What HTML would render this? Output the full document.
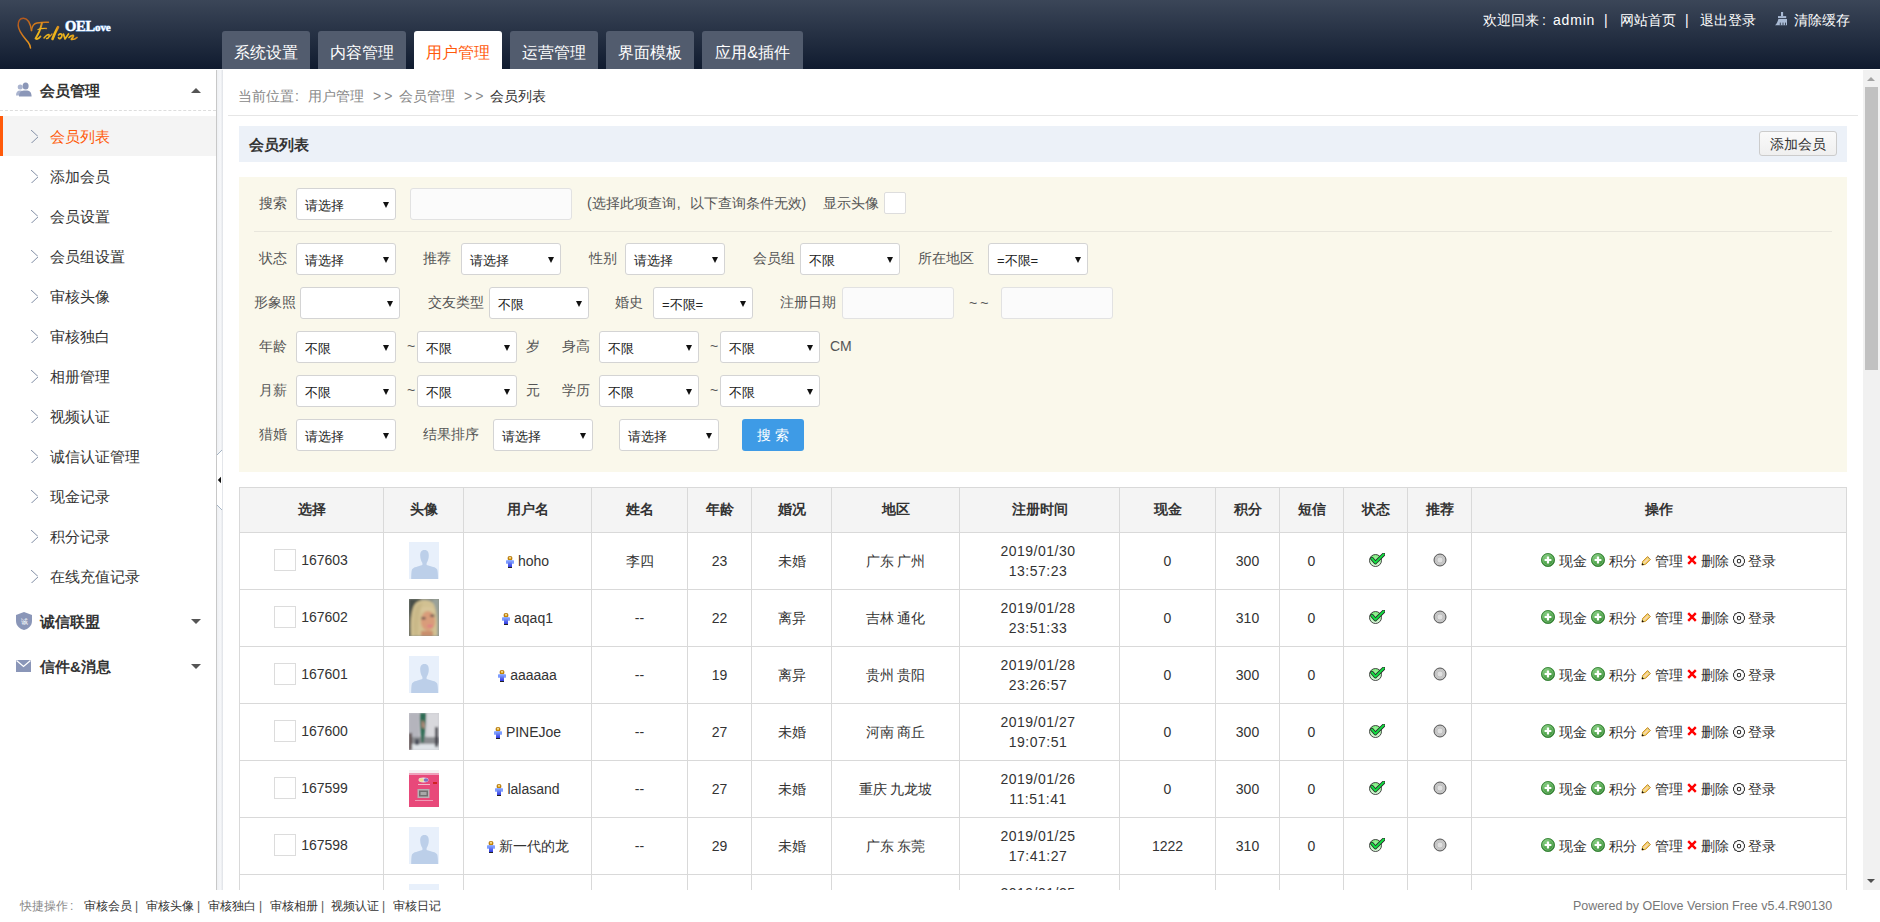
<!DOCTYPE html>
<html><head><meta charset="utf-8">
<style>
*{box-sizing:border-box;margin:0;padding:0}
html,body{width:1880px;height:922px;overflow:hidden;background:#fff;font-family:"Liberation Sans",sans-serif;color:#333}
.abs{position:absolute}
#hdr{position:absolute;left:0;top:0;width:1880px;height:69px;background:linear-gradient(#3b4658,#101b2f)}
.tab{position:absolute;top:31px;height:38px;width:88px;background:#525c6e;border-radius:3px 3px 0 0;color:#fff;font-size:16px;line-height:42px;padding-top:1px;text-align:center;white-space:nowrap}
.tab.on{background:#fff;color:#ff5a0a}
.tl{position:absolute;top:8px;color:#fff;font-size:14px;line-height:24px;white-space:nowrap}
#side{position:absolute;left:0;top:69px;width:216px;height:821px;background:#fff}
.sh{position:absolute;left:40px;font-size:15px;font-weight:bold;color:#333;line-height:22px;white-space:nowrap}
.si{position:absolute;left:0;width:216px;height:40px}
.si span{position:absolute;left:50px;top:1px;line-height:40px;font-size:15px;color:#333;white-space:nowrap}
.si i{position:absolute;left:31px;top:14px;width:7px;height:13px;background:linear-gradient(to top right,transparent calc(50% - 0.8px),#8a96ab 50%,transparent calc(50% + 0.8px)) top/7px 6.5px no-repeat,linear-gradient(to bottom right,transparent calc(50% - 0.8px),#8a96ab 50%,transparent calc(50% + 0.8px)) bottom/7px 6.5px no-repeat}
.si.on{background:#f4f4f4}
.si.on span{color:#ff5a0a}
.si.on:before{content:"";position:absolute;left:0;top:0;width:3px;height:40px;background:#ff5a0a}
#split{position:absolute;left:216px;top:70px;width:7px;height:820px;border-left:1px solid #c8c8c8;background:linear-gradient(90deg,#eef0f3,#f6f7f9 60%,#dfe2e7)}
#main{position:absolute;left:223px;top:69px;width:1657px;height:821px;background:#fff;overflow:hidden}
#mw{position:absolute;left:-223px;top:-69px;width:1880px;height:922px}
.bc{position:absolute;font-size:14px;line-height:22px;color:#333;white-space:nowrap}
.bc.g{color:#888}
.ptitle{position:absolute;font-size:15px;font-weight:bold;line-height:22px;color:#333;white-space:nowrap}
.btn{position:absolute;border:1px solid #ccc;border-radius:3px;background:linear-gradient(#fafafa,#efefef);font-size:14px;line-height:25px;text-align:center;color:#333;white-space:nowrap}
.lab{position:absolute;font-size:14px;line-height:20px;color:#555;white-space:nowrap}
.sel{position:absolute;background:#fff;border:1px solid #d4d4d4;border-radius:3px}
.sel span{position:absolute;left:8px;top:7px;font-size:13px;line-height:20px;color:#222;white-space:nowrap}
.sel b{position:absolute;right:6px;top:13px;width:0;height:0;border-left:3.5px solid transparent;border-right:3.5px solid transparent;border-top:6px solid #111}
.inp{position:absolute;background:#fbfbfb;border:1px solid #e2e2e2;border-radius:3px}
.sbtn{position:absolute;background:#3e9be6;border-radius:3px;color:#fff;font-size:14px;line-height:32px;text-align:center;white-space:nowrap}
#tb{position:absolute;border-collapse:collapse;table-layout:fixed;width:1608px}
#tb td,#tb th{border:1px solid #d9d9d9;text-align:center;font-size:14px;color:#333;white-space:nowrap;padding:0}
#tb th{background:#f4f4f4;height:45px;font-weight:bold}
#tb td{height:57px;line-height:20px}
#tb td.dt{letter-spacing:0.5px;padding-right:3px}
.cb{display:inline-block;width:22px;height:22px;border:1px solid #dcdcdc;background:#fff;vertical-align:middle;margin-right:4px;position:relative;top:-1px;left:-1px}
.av{display:inline-block;width:30px;height:37px;vertical-align:middle;position:relative;top:-1px}
.uic{display:inline-block;width:8px;height:12px;vertical-align:middle;margin-right:4px}
.ic{display:inline-block;vertical-align:middle;position:relative;top:-1px}
.ft{position:absolute;top:5px;line-height:22px;white-space:nowrap;font-size:12px;color:#333}
#foot{position:absolute;left:0;top:890px;width:1880px;height:32px;background:#fff;font-size:12px;color:#333}
</style></head><body>
<svg width="0" height="0" style="position:absolute">
<defs>
<radialGradient id="gpl" cx="0.4" cy="0.35" r="0.7"><stop offset="0" stop-color="#8fd48a"/><stop offset="0.6" stop-color="#4ea34a"/><stop offset="1" stop-color="#2d7a2b"/></radialGradient>
<linearGradient id="gok" x1="0" y1="0" x2="0" y2="1"><stop offset="0" stop-color="#78f078"/><stop offset="1" stop-color="#e0fbe0"/></linearGradient>
<radialGradient id="grec" cx="0.5" cy="0.5" r="0.6"><stop offset="0" stop-color="#eee"/><stop offset="0.5" stop-color="#c8c8c8"/><stop offset="1" stop-color="#bbb"/></radialGradient>
<linearGradient id="gusr" x1="0" y1="0" x2="0" y2="1"><stop offset="0" stop-color="#8fb0ff"/><stop offset="1" stop-color="#2a30e0"/></linearGradient>
<symbol id="s-plus" viewBox="0 0 14 14"><circle cx="7" cy="7" r="6.6" fill="url(#gpl)" stroke="#2f7d2e" stroke-width="0.8"/><circle cx="7" cy="7" r="5.2" fill="none" stroke="#a8dca4" stroke-width="0.6" opacity="0.7"/><path d="M7 3.6V10.4M3.6 7H10.4" stroke="#fff" stroke-width="2.2"/></symbol>
<symbol id="s-pen" viewBox="0 0 10 10"><polygon points="1,9 1.6,5.6 6.6,0.6 9.4,3.4 4.4,8.4" fill="#f6dc70" stroke="#c27400" stroke-width="0.9" stroke-linejoin="round"/><path d="M7.2 1.6 L8.6 3" stroke="#9aa0b0" stroke-width="0.9"/><path d="M3.4 6.6 L6.6 3.4" stroke="#f8d0c0" stroke-width="1.4"/><polygon points="0.7,9.3 1.2,7 3,8.8" fill="#111"/><path d="M1.6 6.4 L3.6 8.4" stroke="#c8f0c8" stroke-width="0.6"/></symbol>
<symbol id="s-x" viewBox="0 0 10 10"><path d="M1.2 1.2 L8.8 8.8 M8.8 1.2 L1.2 8.8" stroke="#f00" stroke-width="2.4"/></symbol>
<symbol id="s-gear" viewBox="0 0 12 12"><path d="M4.2 0.6 H7.8 L8.6 1.8 H10.2 V3.4 L11.4 4.2 V7.8 L10.2 8.6 V10.2 H8.6 L7.8 11.4 H4.2 L3.4 10.2 H1.8 V8.6 L0.6 7.8 V4.2 L1.8 3.4 V1.8 H3.4 Z" fill="#fff" stroke="#222" stroke-width="1"/><rect x="4.4" y="4.4" width="3.2" height="3.4" rx="0.6" fill="none" stroke="#222" stroke-width="1"/></symbol>
<symbol id="s-ok" viewBox="0 0 16 14"><circle cx="6.5" cy="7.5" r="6" fill="url(#gok)" stroke="#333" stroke-width="0.9"/><path d="M3 5.6 L6.4 9.6 L14.6 1.4" fill="none" stroke="#2a2a2a" stroke-width="3.6" stroke-linejoin="round" stroke-linecap="round"/><path d="M3 5.6 L6.4 9.6 L14.6 1.4" fill="none" stroke="#10e040" stroke-width="2" stroke-linejoin="round" stroke-linecap="round"/></symbol>
<symbol id="s-rec" viewBox="0 0 14 14"><circle cx="7" cy="7" r="6" fill="url(#grec)" stroke="#444" stroke-width="0.9"/><circle cx="7" cy="7" r="3" fill="#e0e0e0" stroke="#bbb" stroke-width="0.8"/></symbol>
<symbol id="s-usr" viewBox="0 0 8 12"><rect x="2" y="0.3" width="4" height="4" rx="1.6" fill="#d09000" stroke="#a06000" stroke-width="0.6"/><rect x="3" y="1.3" width="2" height="1.2" fill="#fff4c0"/><rect x="0" y="4.2" width="8" height="3.6" rx="0.6" fill="#7c9cff"/><rect x="2" y="4.2" width="4" height="7.3" fill="url(#gusr)"/><rect x="2" y="11" width="4" height="1" fill="#222"/></symbol>
<symbol id="s-def" viewBox="0 0 30 37"><rect width="30" height="37" fill="#e8f0fb"/><path d="M15.5 8 C12 8 11.2 10.5 11.2 13.5 C11.2 17 12.5 19.5 13.4 21 L13.4 23 C9 24.5 4.5 25 3 27.5 C2.4 29 2.2 33 2.2 37 L29 37 C29 33 28.8 29 28.2 27.5 C27 25 22 24.5 17.6 23 L17.6 21 C18.5 19.5 19.8 17 19.8 13.5 C19.8 10.5 19 8 15.5 8 Z" fill="#bccfe9"/></symbol>
<symbol id="s-p1" viewBox="0 0 30 37"><filter id="fb1" x="-10%" y="-10%" width="120%" height="120%"><feGaussianBlur stdDeviation="0.9"/></filter><rect width="30" height="37" fill="#8a9088"/><g filter="url(#fb1)"><rect x="0" y="0" width="12" height="37" fill="#4a4f48"/><rect x="24" y="0" width="6" height="37" fill="#9aa29a"/><path d="M2 37 C1 25 2 10 6 5 C10 0 20 0 24 4 C28 9 28.5 25 28 37 Z" fill="#d2c192"/><path d="M5 37 C4 28 4 14 7 8 C9 5 12 4 14 4 C10 10 9 25 9 37 Z" fill="#c9b888"/><ellipse cx="19" cy="22" rx="7.2" ry="10" fill="#d99c7a"/><path d="M12 10 C15 7 21 7 25 10 L25 14 C21 11 16 11 12 14 Z" fill="#d8c69a"/><ellipse cx="14.5" cy="19.3" rx="2.4" ry="1.2" fill="#6b5650"/><ellipse cx="23.3" cy="16.8" rx="2.4" ry="1.2" fill="#6b5650"/><ellipse cx="21" cy="27" rx="3" ry="1.3" fill="#e27c84"/><rect x="12" y="32" width="12" height="5" fill="#c98e6c"/></g></symbol>
<symbol id="s-p2" viewBox="0 0 30 37"><filter id="fb2" x="-10%" y="-10%" width="120%" height="120%"><feGaussianBlur stdDeviation="0.8"/></filter><rect width="30" height="37" fill="#c8c8ce"/><g filter="url(#fb2)"><rect x="0" y="0" width="10" height="24" fill="#b4b4bc"/><rect x="18" y="0" width="12" height="24" fill="#d8d8dc"/><rect x="0" y="24" width="30" height="8" fill="#8a8c90"/><rect x="0" y="31" width="30" height="6" fill="#dfe4e8"/><path d="M11 0 H17 C17 8 16 20 14.5 30 L12.5 30 C11.5 20 10.5 8 11 0Z" fill="#2d6a52"/><path d="M13 7 C15 8 16 13 15 16 L13 14 Z" fill="#c29080"/><rect x="0" y="20" width="3" height="17" fill="#5a4a48"/><rect x="26" y="14" width="3" height="20" fill="#3a3a44"/><rect x="6" y="26" width="4" height="6" fill="#4a4e5a"/></g></symbol>
<symbol id="s-p3" viewBox="0 0 30 37"><filter id="fb3" x="-10%" y="-10%" width="120%" height="120%"><feGaussianBlur stdDeviation="0.5"/></filter><rect width="30" height="37" fill="#e8497a"/><g filter="url(#fb3)"><rect width="30" height="3.5" fill="#f6f0f2"/><rect y="3.5" width="30" height="1.5" fill="#f0a0bc"/><ellipse cx="14.5" cy="10" rx="5" ry="2.4" fill="#e8e0ec"/><ellipse cx="12.5" cy="10" rx="2.4" ry="1.7" fill="#f0e090"/><ellipse cx="17" cy="10" rx="2.3" ry="1.7" fill="#8070c0"/><rect x="9" y="14" width="12" height="1" fill="#f4b8cc"/><rect x="24" y="12" width="4" height="2" fill="#d02020"/><rect x="8.5" y="19" width="12" height="9" fill="#b8b0b4"/><rect x="10" y="20.5" width="9" height="6" fill="#707070"/><rect x="11.5" y="22" width="6" height="3" fill="#a8a8a8"/><rect x="6" y="30" width="18" height="1" fill="#f09ab6"/></g></symbol>
</defs></svg>

<div id="hdr">
<svg class="abs" style="left:0;top:0" width="120" height="60" viewBox="0 0 120 60">
<defs><linearGradient id="lgh" x1="0" y1="0" x2="0.3" y2="1"><stop offset="0" stop-color="#b0521c"/><stop offset="1" stop-color="#e8941c"/></linearGradient>
<linearGradient id="lgs" x1="0" y1="0" x2="1" y2="0"><stop offset="0" stop-color="#e8b020"/><stop offset="0.6" stop-color="#f0b818"/><stop offset="1" stop-color="#d88a20"/></linearGradient></defs>
<path d="M31.5 30.5 C30.5 24 28 18.5 23.5 18.3 C19.5 18.2 18 21.5 18.2 25.5 C18.5 32 24 37 28 42 C29.5 44 30.3 46 30.5 48" fill="none" stroke="url(#lgh)" stroke-width="1.5" stroke-linecap="round"/>
<path d="M31.5 30.5 C32 26 34 23.5 37 23 C41 22.3 45 22 48.5 22.3" fill="none" stroke="#d07a1c" stroke-width="1.4" stroke-linecap="round"/>
<g fill="none" stroke="url(#lgs)" stroke-linecap="round" stroke-linejoin="round">
<path d="M42 23 C41 28 38.5 34 35.5 38.5 C37 39.5 39 38.5 40.5 36.5" stroke-width="1.8"/>
<path d="M38 29.5 C40.5 28.5 43 28.3 46.5 28.5" stroke-width="1.3"/>
<path d="M58 27.2 C56.5 30 54 35 52.5 39" stroke-width="2.6"/>
<path d="M44 38 C45.5 36 47.5 34.5 49 34.5 C50 36 48 39 46.5 38.5 M49 37 C50.5 36 51.5 34.5 52 34" stroke-width="1.4"/>
<path d="M58.5 35 C60 33.5 62 33.5 62 35.5 C61.5 38.5 59 39.5 58.5 37.5 M63.5 34 L65 39 L68.5 34 M69 37.5 C71 35.5 73.5 34.5 73.5 36 C73 38 70 39.5 72 39.5 C74 39.5 76 38.5 77 37.5" stroke-width="1.7"/>
</g>
<text x="65" y="30.5" font-family="Liberation Serif" font-size="14.5" font-weight="bold" fill="#fff" stroke="#8cbcf0" stroke-width="0.9" paint-order="stroke" letter-spacing="-0.2">OEL<tspan font-size="11" letter-spacing="-0.1">ove</tspan></text>
</svg>
<div class="tab" style="left:222px">系统设置</div>
<div class="tab" style="left:318px">内容管理</div>
<div class="tab on" style="left:414px">用户管理</div>
<div class="tab" style="left:510px">运营管理</div>
<div class="tab" style="left:606px">界面模板</div>
<div class="tab" style="left:702px;width:101px">应用&amp;插件</div>
<div class="tl" style="left:1483px">欢迎回来<span style="margin-left:3px">:</span></div><div class="tl" style="left:1553px;letter-spacing:0.8px">admin</div>
<div class="tl" style="left:1604px">|</div>
<div class="tl" style="left:1620px">网站首页</div>
<div class="tl" style="left:1685px">|</div>
<div class="tl" style="left:1700px">退出登录</div>
<svg class="abs" style="left:1775px;top:12px" width="13" height="14" viewBox="0 0 13 14"><rect x="6" y="0" width="2.1" height="4.3" fill="#a9bad4"/><rect x="3" y="4.1" width="8.2" height="2" fill="#a9bad4"/><path d="M3.4 7.1 H12 V13.3 H0 C1.6 12.2 2.6 10 3.4 7.1 Z" fill="#a9bad4"/><path d="M5.3 10.6 V13.4 M8 10.6 V13.4 M10.5 10.6 V13.4" stroke="#2f3a4c" stroke-width="0.9"/></svg>
<div class="tl" style="left:1794px">清除缓存</div>
</div>
<div id="side">
<svg class="abs" style="left:16px;top:13px" width="16" height="15" viewBox="0 0 16 15"><circle cx="4.2" cy="5" r="2.5" fill="#aab4cf"/><path d="M0 13.5 C0 10 1.5 8.6 4.2 8.6 C6.5 8.6 7.5 9.5 8 11 L8 13.5 Z" fill="#aab4cf"/><ellipse cx="9.6" cy="4" rx="3" ry="3.6" fill="#8b97b8"/><path d="M3 14.5 C3 10.3 4.8 8.4 9.6 8.4 C14 8.4 15.6 10.3 15.6 14.5 Z" fill="#8b97b8"/></svg>
<div class="sh" style="top:11px">会员管理</div>
<div class="abs" style="left:191px;top:19px;width:0;height:0;border-left:5px solid transparent;border-right:5px solid transparent;border-bottom:5px solid #555"></div>
<div class="abs" style="left:0;top:41px;width:216px;border-top:1px dashed #ddd"></div>
<div class="si on" style="top:47px"><i></i><span>会员列表</span></div>
<div class="si" style="top:87px"><i></i><span>添加会员</span></div>
<div class="si" style="top:127px"><i></i><span>会员设置</span></div>
<div class="si" style="top:167px"><i></i><span>会员组设置</span></div>
<div class="si" style="top:207px"><i></i><span>审核头像</span></div>
<div class="si" style="top:247px"><i></i><span>审核独白</span></div>
<div class="si" style="top:287px"><i></i><span>相册管理</span></div>
<div class="si" style="top:327px"><i></i><span>视频认证</span></div>
<div class="si" style="top:367px"><i></i><span>诚信认证管理</span></div>
<div class="si" style="top:407px"><i></i><span>现金记录</span></div>
<div class="si" style="top:447px"><i></i><span>积分记录</span></div>
<div class="si" style="top:487px"><i></i><span>在线充值记录</span></div>
<svg class="abs" style="left:16px;top:543px" width="16" height="18" viewBox="0 0 16 18"><path d="M8 0 L16 3 V9 C16 14 12 17 8 18 C4 17 0 14 0 9 V3 Z" fill="#8a96b8"/><text x="8" y="12" font-size="7" fill="#fff" text-anchor="middle" font-family="Liberation Sans">诚</text></svg>
<div class="sh" style="top:542px">诚信联盟</div>
<div class="abs" style="left:191px;top:550px;width:0;height:0;border-left:5px solid transparent;border-right:5px solid transparent;border-top:5px solid #555"></div>
<svg class="abs" style="left:16px;top:591px" width="15" height="12" viewBox="0 0 15 12"><rect x="0" y="0" width="15" height="12" fill="#8a96b8"/><path d="M0.5 0.5 L7.5 6.5 L14.5 0.5" fill="none" stroke="#fff" stroke-width="1.3"/></svg>
<div class="sh" style="top:587px">信件&amp;消息</div>
<div class="abs" style="left:191px;top:595px;width:0;height:0;border-left:5px solid transparent;border-right:5px solid transparent;border-top:5px solid #555"></div>
</div>
<div id="split"></div>
<svg class="abs" style="left:216px;top:448px" width="7" height="64" viewBox="0 0 7 64"><polygon points="1,7 6,2 6,62 1,57" fill="#fff"/><path d="M1 7 L6 2 M1 57 L6 62" stroke="#8ea2b6" stroke-width="0.8"/><polygon points="1.8,32 5,28.8 5,35.2" fill="#111"/></svg>
<div id="main"><div id="mw">
<div class="bc g" style="left:238px;top:85px">当前位置<span style="margin-left:1px">:</span></div><div class="bc g" style="left:308px;top:85px">用户管理</div><div class="bc g" style="left:373px;top:85px;letter-spacing:3px">&gt;&gt;</div><div class="bc g" style="left:399px;top:85px">会员管理</div><div class="bc g" style="left:464px;top:85px;letter-spacing:3px">&gt;&gt;</div><div class="bc" style="left:490px;top:85px">会员列表</div>
<div class="abs" style="left:228px;top:115px;width:1630px;height:1px;background:#e6e6e6"></div>
<div class="abs" style="left:239px;top:126px;width:1608px;height:36px;background:#ecf1f8"></div>
<div class="ptitle" style="left:249px;top:134px">会员列表</div>
<div class="btn" style="left:1759px;top:131px;width:78px;height:25px">添加会员</div>
<div class="abs" style="left:239px;top:177px;width:1608px;height:295px;background:#faf8eb"></div>
<div class="abs" style="left:254px;top:231px;width:1578px;height:1px;background:#e8e6dc"></div>
<div class="lab" style="left:259px;top:193px">搜索</div>
<div class="sel" style="left:296px;top:188px;width:100px;height:32px"><span>请选择</span><b></b></div>
<div class="inp" style="left:410px;top:188px;width:162px;height:32px"></div>
<div class="lab" style="left:587px;top:193px">(选择此项查询<span style="margin-left:1px">,</span><span style="margin-left:9px">以下查询条件无效)</span></div>
<div class="lab" style="left:823px;top:193px">显示头像</div>
<div class="abs" style="left:884px;top:192px;width:22px;height:22px;background:#fff;border:1px solid #ddd;border-radius:2px"></div>
<div class="lab" style="left:259px;top:248px">状态</div>
<div class="sel" style="left:296px;top:243px;width:100px;height:32px"><span>请选择</span><b></b></div>
<div class="lab" style="left:423px;top:248px">推荐</div>
<div class="sel" style="left:461px;top:243px;width:100px;height:32px"><span>请选择</span><b></b></div>
<div class="lab" style="left:589px;top:248px">性别</div>
<div class="sel" style="left:625px;top:243px;width:100px;height:32px"><span>请选择</span><b></b></div>
<div class="lab" style="left:753px;top:248px">会员组</div>
<div class="sel" style="left:800px;top:243px;width:100px;height:32px"><span>不限</span><b></b></div>
<div class="lab" style="left:918px;top:248px">所在地区</div>
<div class="sel" style="left:988px;top:243px;width:100px;height:32px"><span>=不限=</span><b></b></div>
<div class="lab" style="left:254px;top:292px">形象照</div>
<div class="sel" style="left:300px;top:287px;width:100px;height:32px"><span></span><b></b></div>
<div class="lab" style="left:428px;top:292px">交友类型</div>
<div class="sel" style="left:489px;top:287px;width:100px;height:32px"><span>不限</span><b></b></div>
<div class="lab" style="left:615px;top:292px">婚史</div>
<div class="sel" style="left:653px;top:287px;width:100px;height:32px"><span>=不限=</span><b></b></div>
<div class="lab" style="left:780px;top:292px">注册日期</div>
<div class="inp" style="left:842px;top:287px;width:112px;height:32px"></div>
<div class="lab" style="left:969px;top:293px;letter-spacing:3px">~~</div>
<div class="inp" style="left:1001px;top:287px;width:112px;height:32px"></div>
<div class="lab" style="left:259px;top:336px">年龄</div>
<div class="sel" style="left:296px;top:331px;width:100px;height:32px"><span>不限</span><b></b></div>
<div class="lab" style="left:407px;top:336px">~</div>
<div class="sel" style="left:417px;top:331px;width:100px;height:32px"><span>不限</span><b></b></div>
<div class="lab" style="left:526px;top:336px">岁</div>
<div class="lab" style="left:562px;top:336px">身高</div>
<div class="sel" style="left:599px;top:331px;width:100px;height:32px"><span>不限</span><b></b></div>
<div class="lab" style="left:710px;top:336px">~</div>
<div class="sel" style="left:720px;top:331px;width:100px;height:32px"><span>不限</span><b></b></div>
<div class="lab" style="left:830px;top:336px">CM</div>
<div class="lab" style="left:259px;top:380px">月薪</div>
<div class="sel" style="left:296px;top:375px;width:100px;height:32px"><span>不限</span><b></b></div>
<div class="lab" style="left:407px;top:380px">~</div>
<div class="sel" style="left:417px;top:375px;width:100px;height:32px"><span>不限</span><b></b></div>
<div class="lab" style="left:526px;top:380px">元</div>
<div class="lab" style="left:562px;top:380px">学历</div>
<div class="sel" style="left:599px;top:375px;width:100px;height:32px"><span>不限</span><b></b></div>
<div class="lab" style="left:710px;top:380px">~</div>
<div class="sel" style="left:720px;top:375px;width:100px;height:32px"><span>不限</span><b></b></div>
<div class="lab" style="left:259px;top:424px">猎婚</div>
<div class="sel" style="left:296px;top:419px;width:100px;height:32px"><span>请选择</span><b></b></div>
<div class="lab" style="left:423px;top:424px">结果排序</div>
<div class="sel" style="left:493px;top:419px;width:100px;height:32px"><span>请选择</span><b></b></div>
<div class="sel" style="left:619px;top:419px;width:100px;height:32px"><span>请选择</span><b></b></div>
<div class="sbtn" style="left:742px;top:419px;width:62px;height:32px">搜 索</div>
<table id="tb" style="left:239px;top:487px"><colgroup><col style="width:144px"><col style="width:80px"><col style="width:128px"><col style="width:96px"><col style="width:64px"><col style="width:80px"><col style="width:128px"><col style="width:160px"><col style="width:96px"><col style="width:64px"><col style="width:64px"><col style="width:64px"><col style="width:64px"><col style="width:375px"></colgroup><tr class="th"><th>选择</th><th>头像</th><th>用户名</th><th>姓名</th><th>年龄</th><th>婚况</th><th>地区</th><th>注册时间</th><th>现金</th><th>积分</th><th>短信</th><th>状态</th><th>推荐</th><th>操作</th></tr><tr><td><span class="cb"></span>167603</td><td><svg class="av" width="30" height="37"><use href="#s-def"/></svg></td><td><svg class="uic" width="8" height="12"><use href="#s-usr"/></svg>hoho</td><td>李四</td><td>23</td><td>未婚</td><td>广东 广州</td><td class="dt">2019/01/30<br>13:57:23</td><td>0</td><td>300</td><td>0</td><td><svg class="ic" width="16" height="14" style="top:-2px;left:1px"><use href="#s-ok"/></svg></td><td><svg class="ic" width="14" height="14" style="top:-2px"><use href="#s-rec"/></svg></td><td><span class="ops"><svg class="ic" width="14" height="14" style="top:-2px"><use href="#s-plus"/></svg> 现金 <svg class="ic" width="14" height="14" style="top:-2px"><use href="#s-plus"/></svg> 积分 <svg class="ic" width="10" height="10"><use href="#s-pen"/></svg> 管理 <svg class="ic" width="10" height="10" style="top:-2px"><use href="#s-x"/></svg> 删除 <svg class="ic" width="12" height="12"><use href="#s-gear"/></svg> 登录</span></td></tr><tr><td><span class="cb"></span>167602</td><td><svg class="av" width="30" height="37"><use href="#s-p1"/></svg></td><td><svg class="uic" width="8" height="12"><use href="#s-usr"/></svg>aqaq1</td><td>--</td><td>22</td><td>离异</td><td>吉林 通化</td><td class="dt">2019/01/28<br>23:51:33</td><td>0</td><td>310</td><td>0</td><td><svg class="ic" width="16" height="14" style="top:-2px;left:1px"><use href="#s-ok"/></svg></td><td><svg class="ic" width="14" height="14" style="top:-2px"><use href="#s-rec"/></svg></td><td><span class="ops"><svg class="ic" width="14" height="14" style="top:-2px"><use href="#s-plus"/></svg> 现金 <svg class="ic" width="14" height="14" style="top:-2px"><use href="#s-plus"/></svg> 积分 <svg class="ic" width="10" height="10"><use href="#s-pen"/></svg> 管理 <svg class="ic" width="10" height="10" style="top:-2px"><use href="#s-x"/></svg> 删除 <svg class="ic" width="12" height="12"><use href="#s-gear"/></svg> 登录</span></td></tr><tr><td><span class="cb"></span>167601</td><td><svg class="av" width="30" height="37"><use href="#s-def"/></svg></td><td><svg class="uic" width="8" height="12"><use href="#s-usr"/></svg>aaaaaa</td><td>--</td><td>19</td><td>离异</td><td>贵州 贵阳</td><td class="dt">2019/01/28<br>23:26:57</td><td>0</td><td>300</td><td>0</td><td><svg class="ic" width="16" height="14" style="top:-2px;left:1px"><use href="#s-ok"/></svg></td><td><svg class="ic" width="14" height="14" style="top:-2px"><use href="#s-rec"/></svg></td><td><span class="ops"><svg class="ic" width="14" height="14" style="top:-2px"><use href="#s-plus"/></svg> 现金 <svg class="ic" width="14" height="14" style="top:-2px"><use href="#s-plus"/></svg> 积分 <svg class="ic" width="10" height="10"><use href="#s-pen"/></svg> 管理 <svg class="ic" width="10" height="10" style="top:-2px"><use href="#s-x"/></svg> 删除 <svg class="ic" width="12" height="12"><use href="#s-gear"/></svg> 登录</span></td></tr><tr><td><span class="cb"></span>167600</td><td><svg class="av" width="30" height="37"><use href="#s-p2"/></svg></td><td><svg class="uic" width="8" height="12"><use href="#s-usr"/></svg>PINEJoe</td><td>--</td><td>27</td><td>未婚</td><td>河南 商丘</td><td class="dt">2019/01/27<br>19:07:51</td><td>0</td><td>300</td><td>0</td><td><svg class="ic" width="16" height="14" style="top:-2px;left:1px"><use href="#s-ok"/></svg></td><td><svg class="ic" width="14" height="14" style="top:-2px"><use href="#s-rec"/></svg></td><td><span class="ops"><svg class="ic" width="14" height="14" style="top:-2px"><use href="#s-plus"/></svg> 现金 <svg class="ic" width="14" height="14" style="top:-2px"><use href="#s-plus"/></svg> 积分 <svg class="ic" width="10" height="10"><use href="#s-pen"/></svg> 管理 <svg class="ic" width="10" height="10" style="top:-2px"><use href="#s-x"/></svg> 删除 <svg class="ic" width="12" height="12"><use href="#s-gear"/></svg> 登录</span></td></tr><tr><td><span class="cb"></span>167599</td><td><svg class="av" width="30" height="37"><use href="#s-p3"/></svg></td><td><svg class="uic" width="8" height="12"><use href="#s-usr"/></svg>lalasand</td><td>--</td><td>27</td><td>未婚</td><td>重庆 九龙坡</td><td class="dt">2019/01/26<br>11:51:41</td><td>0</td><td>300</td><td>0</td><td><svg class="ic" width="16" height="14" style="top:-2px;left:1px"><use href="#s-ok"/></svg></td><td><svg class="ic" width="14" height="14" style="top:-2px"><use href="#s-rec"/></svg></td><td><span class="ops"><svg class="ic" width="14" height="14" style="top:-2px"><use href="#s-plus"/></svg> 现金 <svg class="ic" width="14" height="14" style="top:-2px"><use href="#s-plus"/></svg> 积分 <svg class="ic" width="10" height="10"><use href="#s-pen"/></svg> 管理 <svg class="ic" width="10" height="10" style="top:-2px"><use href="#s-x"/></svg> 删除 <svg class="ic" width="12" height="12"><use href="#s-gear"/></svg> 登录</span></td></tr><tr><td><span class="cb"></span>167598</td><td><svg class="av" width="30" height="37"><use href="#s-def"/></svg></td><td><svg class="uic" width="8" height="12"><use href="#s-usr"/></svg>新一代的龙</td><td>--</td><td>29</td><td>未婚</td><td>广东 东莞</td><td class="dt">2019/01/25<br>17:41:27</td><td>1222</td><td>310</td><td>0</td><td><svg class="ic" width="16" height="14" style="top:-2px;left:1px"><use href="#s-ok"/></svg></td><td><svg class="ic" width="14" height="14" style="top:-2px"><use href="#s-rec"/></svg></td><td><span class="ops"><svg class="ic" width="14" height="14" style="top:-2px"><use href="#s-plus"/></svg> 现金 <svg class="ic" width="14" height="14" style="top:-2px"><use href="#s-plus"/></svg> 积分 <svg class="ic" width="10" height="10"><use href="#s-pen"/></svg> 管理 <svg class="ic" width="10" height="10" style="top:-2px"><use href="#s-x"/></svg> 删除 <svg class="ic" width="12" height="12"><use href="#s-gear"/></svg> 登录</span></td></tr><tr><td><span class="cb"></span>167597</td><td><svg class="av" width="30" height="37"><use href="#s-def"/></svg></td><td><svg class="uic" width="8" height="12"><use href="#s-usr"/></svg>x</td><td>--</td><td>25</td><td>未婚</td><td>广东 广州</td><td class="dt">2019/01/25<br>10:11:12</td><td>0</td><td>300</td><td>0</td><td><svg class="ic" width="16" height="14" style="top:-2px;left:1px"><use href="#s-ok"/></svg></td><td><svg class="ic" width="14" height="14" style="top:-2px"><use href="#s-rec"/></svg></td><td><span class="ops"><svg class="ic" width="14" height="14" style="top:-2px"><use href="#s-plus"/></svg> 现金 <svg class="ic" width="14" height="14" style="top:-2px"><use href="#s-plus"/></svg> 积分 <svg class="ic" width="10" height="10"><use href="#s-pen"/></svg> 管理 <svg class="ic" width="10" height="10" style="top:-2px"><use href="#s-x"/></svg> 删除 <svg class="ic" width="12" height="12"><use href="#s-gear"/></svg> 登录</span></td></tr></table>
<div class="abs" style="left:1863px;top:70px;width:17px;height:820px;background:#f1f1f1"></div>
<div class="abs" style="left:1865px;top:87px;width:13px;height:283px;background:#c1c1c1"></div>
<div class="abs" style="left:1867px;top:77px;width:0;height:0;border-left:4px solid transparent;border-right:4px solid transparent;border-bottom:4px solid #a3a3a3"></div>
<div class="abs" style="left:1867px;top:879px;width:0;height:0;border-left:4px solid transparent;border-right:4px solid transparent;border-top:4px solid #505050"></div>
</div></div><!--endmain-->
<div id="foot">
<div class="ft" style="left:20px;color:#888">快捷操作<span style="margin-left:2px">:</span></div>
<div class="ft" style="left:84px">审核会员</div>
<div class="ft" style="left:135px;color:#555">|</div>
<div class="ft" style="left:146px">审核头像</div>
<div class="ft" style="left:197px;color:#555">|</div>
<div class="ft" style="left:208px">审核独白</div>
<div class="ft" style="left:259px;color:#555">|</div>
<div class="ft" style="left:270px">审核相册</div>
<div class="ft" style="left:321px;color:#555">|</div>
<div class="ft" style="left:331px">视频认证</div>
<div class="ft" style="left:382px;color:#555">|</div>
<div class="ft" style="left:393px">审核日记</div>
<div class="ft" style="left:1573px;color:#777;font-size:12.5px">Powered by OElove Version Free v5.4.R90130</div>
</div>
</body></html>
